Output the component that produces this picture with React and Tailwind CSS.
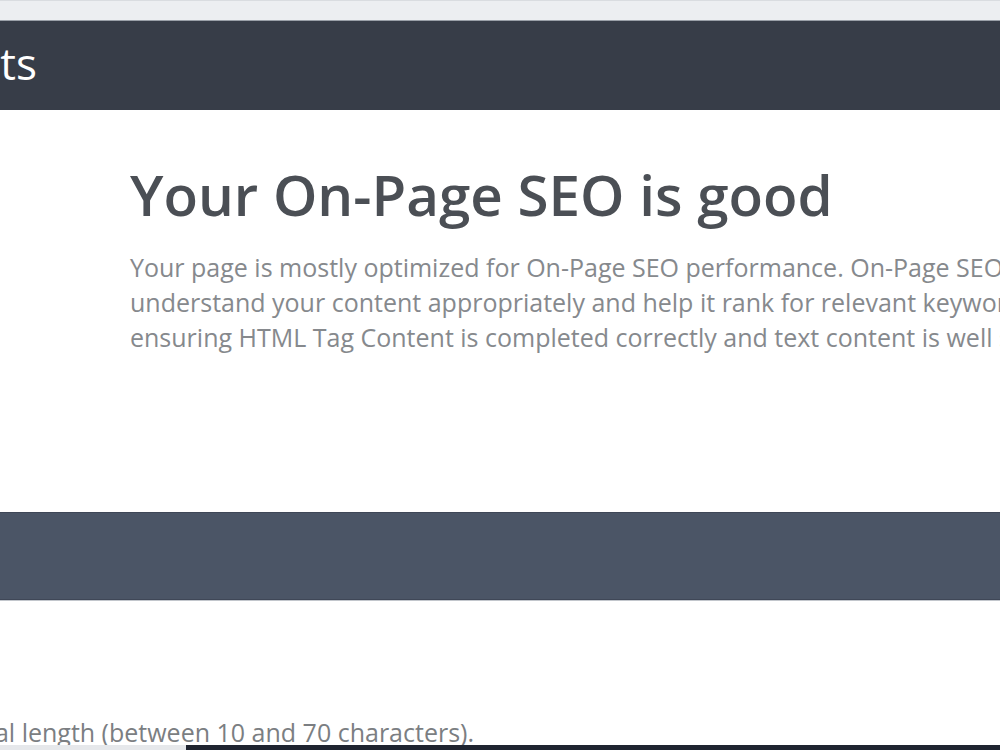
export default function App() {
  return (
    <div className="h-[750px] w-[1000px] overflow-hidden bg-white font-['Open_Sans',sans-serif]">
      {/* Top strip */}
      <div className="h-[20px] border-t border-[#d9dce0] bg-[#eceef1]" />
      <div className="h-px bg-[#9aa0a8]" />

      {/* Header bar */}
      <div className="flex h-[89px] items-center bg-[#373d48]">
        <div className="flex w-[37px] justify-end">
          <h1 className="mt-[-6px] whitespace-nowrap text-[44px] leading-none text-white">Results</h1>
        </div>
      </div>

      {/* Summary */}
      <div className="h-[402px] pl-[130px] pt-[50px]">
        <h2 className="whitespace-nowrap text-[56.5px] font-semibold leading-[70px] text-[#4b4f55]">
          Your On-Page SEO is good
        </h2>
        <p className="mt-[20px] whitespace-nowrap text-[25px] leading-[35px] text-[#86898d]">
          Your page is mostly optimized for On-Page SEO performance. On-Page SEO is important to ensure Search Engines can
          <br />
          understand your content appropriately and help it rank for relevant keywords. You can improve On-Page SEO by
          <br />
          ensuring HTML Tag Content is completed correctly and text content is well structured.
        </p>
      </div>

      {/* Section bar */}
      <div className="h-[88px] border-y border-[#3f4757] bg-[#4b5566]" />
      <div className="h-px bg-[#c2c6cc]" />

      {/* Body */}
      <div className="flex h-[144px] w-[474px] items-end justify-end">
        <p className="mb-[-3px] whitespace-nowrap text-[25px] leading-[32px] text-[#7b7e82]">
          The title tag is an optimal length (between 10 and 70 characters).
        </p>
      </div>

      {/* Bottom strip */}
      <div className="flex h-[6px]">
        <div className="w-[186px] bg-[#e6e8eb]" />
        <div className="flex-1 bg-[#1f2430]" />
      </div>
    </div>
  )
}
